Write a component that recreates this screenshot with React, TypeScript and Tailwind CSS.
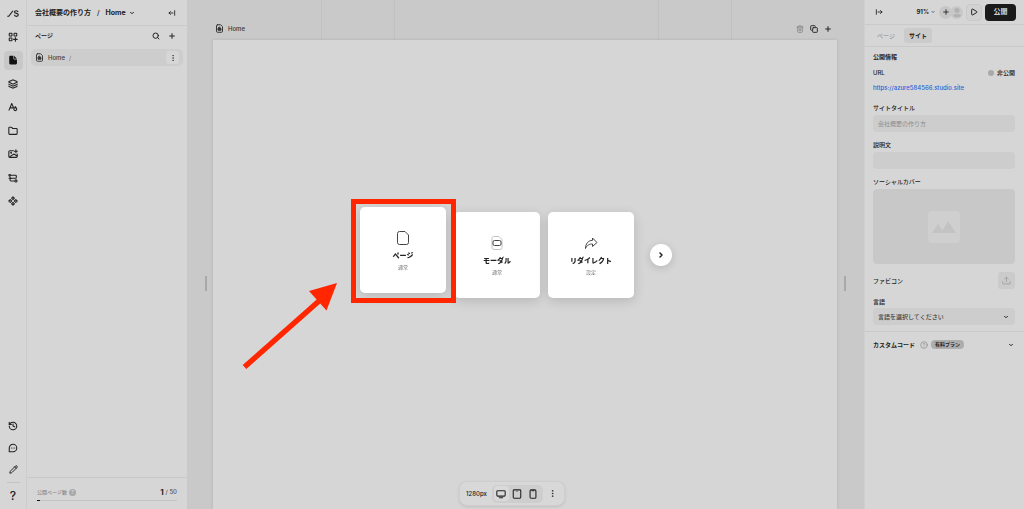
import type { ReactNode } from "react"
import {
  ChevronDown,
  ChevronRight,
  CircleHelp,
  Copy,
  EllipsisVertical,
  Folder,
  History,
  Layers,
  Pencil,
  Play,
  Plus,
  Search,
  Trash2,
} from "lucide-react"

interface IconProps {
  className?: string
  children?: ReactNode
}

const Icon = ({ className = "size-[10px]", children }: IconProps) => (
  <svg
    viewBox="0 0 24 24"
    className={className}
    fill="none"
    stroke="currentColor"
    strokeWidth="2.6"
    strokeLinecap="round"
    strokeLinejoin="round"
    aria-hidden="true"
  >
    {children}
  </svg>
)

const Logo = () => (
  <svg viewBox="0 0 24 14" className="h-[7px] w-3" fill="none" stroke="currentColor" strokeWidth="2.4" aria-hidden="true">
    <path d="M0.5 12.5h3L12 1.5" />
    <path d="M22 4.2C21.6 2.4 20.3 1.5 18.4 1.5c-2 0-3.4 1-3.4 2.6 0 3.8 7.6 1.8 7.6 5.6 0 1.8-1.6 2.9-3.8 2.9-2.3 0-3.8-1.1-4.1-3.1" />
  </svg>
)

const AddBoxIcon = () => (
  <Icon>
    <rect x="3" y="3" width="6.5" height="6.5" rx="1" />
    <rect x="14.5" y="3" width="6.5" height="6.5" rx="1" />
    <rect x="3" y="14.5" width="6.5" height="6.5" rx="1" />
    <path d="M17.75 13.5v8.5M13.5 17.75H22" />
  </Icon>
)

const PageSolidIcon = () => (
  <svg viewBox="0 0 24 24" className="size-[10px]" fill="currentColor" aria-hidden="true">
    <path d="M5.5 2H13v5.5c0 1.7 1.3 3 3 3h5.5V20a2.5 2.5 0 0 1-2.5 2.5H5.5A2.5 2.5 0 0 1 3 20V4.5A2.5 2.5 0 0 1 5.5 2z" />
    <path d="M14.5 2 21.5 9H16.5A2 2 0 0 1 14.5 7z" />
  </svg>
)

const TypeIcon = () => (
  <Icon>
    <path d="M2.5 19.5 9 3.5l4.2 10M5 14h7" />
    <circle cx="17.5" cy="17" r="3.6" />
    <path d="M17.5 11v2.4" />
  </Icon>
)

const ImageAddIcon = () => (
  <Icon>
    <path d="M13 4H4.5A2.5 2.5 0 0 0 2 6.5v11A2.5 2.5 0 0 0 4.500 20h15a2.5 2.5 0 0 0 2.5-2.5V12" />
    <path d="m4 19 10-7 8 5M19 2v7M15.5 5.5h7" />
    <circle cx="7.5" cy="9" r="1" />
  </Icon>
)

const FlowIcon = () => (
  <Icon>
    <circle cx="4" cy="5.5" r="2" />
    <path d="M6.500 5.5H18a2 2 0 0 1 2 2v3a2 2 0 0 1-2 2H7a2 2 0 0 0-2 2V17a2 2 0 0 0 2 2h8" />
    <path d="M5 9.500v3M2.500 12.5H7" />
    <circle cx="19" cy="19" r="2.6" />
  </Icon>
)

const ComponentIcon = () => (
  <Icon>
    <path d="m12 2 3.3 3.3L12 8.600 8.700 5.300zM12 15.400l3.300 3.300L12 22l-3.300-3.300zM5.300 8.700 8.600 12l-3.300 3.300L2 12zM18.700 8.700 22 12l-3.300 3.300-3.300-3.300z" />
  </Icon>
)

const CommentIcon = () => (
  <Icon>
    <path d="M3 21V12a9 9 0 1 1 9 9z" />
    <path d="M8 12h.01M12 12h.01M16 12h.01" />
  </Icon>
)

const HomePageIcon = () => (
  <Icon className="size-[9px]">
    <path d="M6.5 2H15l5 5v12.5a2.500 2.500 0 0 1-2.500 2.500h-11A2.500 2.500 0 0 1 4 19.500v-15A2.500 2.500 0 0 1 6.500 2z" />
    <path d="m12 8.500 4 3.500v4.500H8V12z" fill="currentColor" />
  </Icon>
)

const CollapseIcon = ({ flip = false }: { flip?: boolean }) => (
  <Icon className={flip ? "size-2 rotate-180" : "size-2"}>
    <path d="M20 5v14M15 12H3M7.5 7.5 3 12l4.5 4.5" />
  </Icon>
)

const railTools = [
  { label: "追加", icon: <AddBoxIcon /> },
  { label: "ページ", icon: <PageSolidIcon />, active: true },
  { label: "レイヤー", icon: <Layers className="size-[10px]" strokeWidth={2.6} /> },
  { label: "フォント", icon: <TypeIcon /> },
  { label: "フォルダ", icon: <Folder className="size-[10px]" strokeWidth={2.6} /> },
  { label: "画像", icon: <ImageAddIcon /> },
  { label: "フロー", icon: <FlowIcon /> },
  { label: "コンポーネント", icon: <ComponentIcon /> },
]

const Rail = () => (
  <nav className="flex w-[27px] shrink-0 flex-col items-center border-r border-[#cdcdcd]">
    <div className="flex h-[27px] items-center">
      <Logo />
    </div>
    <div className="flex h-[184px] flex-col justify-between">
      {railTools.map((tool) => (
        <button
          key={tool.label}
          aria-label={tool.label}
          className={`flex size-[19px] items-center justify-center rounded ${tool.active ? "bg-[#c8c8c8] text-[#111]" : ""}`}
        >
          {tool.icon}
        </button>
      ))}
    </div>
    <div className="mt-auto flex flex-col items-center gap-[3px] pb-1">
      <button aria-label="履歴" className="flex size-[19px] items-center justify-center">
        <History className="size-[10px]" strokeWidth={2.6} />
      </button>
      <button aria-label="コメント" className="flex size-[19px] items-center justify-center">
        <CommentIcon />
      </button>
      <button aria-label="編集" className="flex size-[19px] items-center justify-center">
        <Pencil className="size-[9px]" strokeWidth={2.6} />
      </button>
      <div className="h-px w-[13px] bg-[#c4c4c4]" />
      <button aria-label="ヘルプ" className="size-[19px] text-[12px] leading-[19px] font-medium">
        ?
      </button>
    </div>
  </nav>
)

const PagesPanel = () => (
  <aside className="flex w-[160px] shrink-0 flex-col">
    <div className="flex h-[26px] items-center border-b border-[#cacaca] pr-[11px] pl-2 font-bold">
      <span>会社概要の作り方</span>
      <span className="px-1.5 font-medium">/</span>
      <button className="flex items-center gap-[3px]">
        Home <ChevronDown className="size-[6px]" strokeWidth={4} />
      </button>
      <button aria-label="パネルを閉じる" className="ml-auto">
        <CollapseIcon />
      </button>
    </div>
    <div className="flex h-5 items-center pr-[11px] pl-2">
      <h2 className="text-[6px] font-bold">ページ</h2>
      <button aria-label="検索" className="mr-2 ml-auto">
        <Search className="size-2" strokeWidth={3} />
      </button>
      <button aria-label="ページを追加">
        <Plus className="size-2" strokeWidth={3} />
      </button>
    </div>
    <div className="mx-1 mt-[3px] flex h-[17px] items-center rounded-[5px] bg-[#cdcdcd] px-1 text-[6px] font-medium text-[#3a3a3a]">
      <HomePageIcon />
      <span className="ml-1">Home</span>
      <span className="ml-1 text-[6px] text-[#888]">/</span>
      <button aria-label="メニュー" className="ml-auto flex size-[13px] items-center justify-center rounded-[3px] bg-[#d6d6d6]">
        <EllipsisVertical className="size-2" strokeWidth={2} />
      </button>
    </div>
    <div className="mt-auto h-8 border-t border-[#c8c8c8] px-2.5 pt-2">
      <div className="flex items-center">
        <span className="text-[5px] font-medium text-[#888]">公開ページ数</span>
        <span className="ml-0.5 flex size-[7px] items-center justify-center rounded-full bg-[#a8a8a8] text-[5px] font-bold text-[#d6d6d6]">?</span>
        <span className="ml-auto text-[8px] leading-[12px] font-bold">1</span>
        <span className="ml-0.5 text-[6px] font-medium text-[#555]">/ 50</span>
      </div>
      <div className="mt-0.5 h-px bg-[#c4c4c4]">
        <div className="h-px w-[3px] bg-[#111]" />
      </div>
    </div>
  </aside>
)

const Canvas = () => (
  <main className="flex min-w-0 flex-1 flex-col bg-[#c9c9c9]">
    <div className="flex h-10 shrink-0">
      <div className="flex flex-1 items-end gap-1 pb-[7px] pl-[28px] text-[#333]">
        <HomePageIcon />
        <span className="text-[6px] leading-[9px] font-medium">Home</span>
      </div>
      <div className="w-[74px] border-x border-[#c1c1c1]" />
      <div className="w-[263px]" />
      <div className="w-[74px] border-x border-[#c1c1c1]" />
      <div className="flex w-[132px] items-end justify-end gap-1.5 pr-8 pb-[7px]">
        <button aria-label="削除" className="text-[#888]">
          <Trash2 className="size-2" strokeWidth={2.6} />
        </button>
        <button aria-label="複製">
          <Copy className="size-2" strokeWidth={2.8} />
        </button>
        <button aria-label="追加">
          <Plus className="size-2" strokeWidth={3} />
        </button>
      </div>
    </div>
    <div className="flex flex-1">
      <div className="flex w-[26px] items-center justify-end pt-[18px] pr-1.5">
        <div className="h-[15px] w-0.5 bg-[#a8a8a8]" />
      </div>
      <div className="flex flex-1 flex-col items-center justify-end bg-[#d6d6d6] pb-[3px] shadow-[0_0_3px_rgba(0,0,0,0.12)]">
        <div className="mr-[26px] flex h-[25px] items-center rounded-lg border border-[#cecece] bg-[#d8d8d8] px-1.5 shadow-[0_1px_3px_rgba(0,0,0,0.1)]">
          <span className="text-[6px] font-medium">1280px</span>
          <div className="ml-[5px] flex h-[18px] items-center rounded-[5px] bg-[#cecece] px-0.5">
            <button aria-label="デスクトップ" className="flex size-[15px] items-center justify-center rounded bg-[#dadada]">
              <Icon>
                <rect x="2" y="4" width="20" height="13" rx="2" />
                <path d="M8 21h8" />
              </Icon>
            </button>
            <button aria-label="タブレット" className="flex h-[15px] w-4 items-center justify-center">
              <Icon>
                <rect x="3" y="2" width="18" height="20" rx="2" />
                <path d="M12 5.5h.01" />
              </Icon>
            </button>
            <button aria-label="モバイル" className="flex h-[15px] w-4 items-center justify-center">
              <Icon>
                <rect x="5" y="2" width="14" height="20" rx="2.5" />
                <path d="M10 4h4" />
              </Icon>
            </button>
          </div>
          <button aria-label="その他" className="mr-px ml-[5px]">
            <EllipsisVertical className="size-[9px]" strokeWidth={2} />
          </button>
        </div>
      </div>
      <div className="flex w-[27px] items-center pt-[18px] pl-[7px]">
        <div className="h-[15px] w-0.5 bg-[#a8a8a8]" />
      </div>
    </div>
  </main>
)

const SettingsPanel = () => (
  <aside className="w-[160px] shrink-0 border-l border-[#cfcfcf] text-[6px] leading-[12px]">
    <div className="flex h-[25px] items-center border-b border-[#cacaca] pr-2 pl-2.5">
      <button aria-label="パネルを閉じる">
        <CollapseIcon flip />
      </button>
      <button className="ml-auto flex items-center gap-0.5 font-bold">
        91% <ChevronDown className="size-[4px]" strokeWidth={4} />
      </button>
      <button aria-label="メンバーを招待" className="ml-1 flex size-[13px] items-center justify-center rounded-full bg-[#c6c6c6]">
        <Plus className="size-2" strokeWidth={2.6} />
      </button>
      <span className="-ml-0.5 flex size-[13px] items-center justify-center rounded-full bg-[#c8c8c8]">
        <svg viewBox="0 0 24 24" className="size-3 text-[#b2b2b2]" fill="currentColor" aria-hidden="true">
          <circle cx="12" cy="9" r="5" />
          <path d="M3.5 19.5c2-4.5 15-4.5 17 0-4 4-13 4-17 0z" />
        </svg>
      </span>
      <button aria-label="プレビュー" className="ml-[3px] flex h-[17px] w-4 items-center justify-center rounded border border-[#c9c9c9] bg-[#d2d2d2]">
        <Play className="size-2" strokeWidth={3} />
      </button>
      <button className="ml-[3px] h-[17px] w-[31px] rounded bg-[#1a1a1a] text-[7px] font-bold text-[#d6d6d6]">公開</button>
    </div>
    <div className="flex h-[22px] items-center border-b border-[#cacaca] pl-2">
      <button className="px-1 text-[#888]">ページ</button>
      <button className="ml-[5px] h-[15px] rounded-[3px] bg-[#cbcbcb] px-[5px] font-bold">サイト</button>
    </div>

    <div className="pt-1 pr-[9px] pb-1.5 pl-2">
      <h3 className="font-bold">公開情報</h3>
      <div className="mt-1 flex items-center">
        <span className="font-medium">URL</span>
        <span className="mr-[3px] ml-auto size-1.5 rounded-full bg-[#a9a9a9]" />
        <span className="font-medium">非公開</span>
      </div>
      <a href="https://azure584566.studio.site" className="mt-[3px] block font-medium text-[#2a63d6]">
        https://azure584566.studio.site
      </a>

      <label htmlFor="site-title" className="mt-2 block font-medium">サイトタイトル</label>
      <input
        id="site-title"
        placeholder="会社概要の作り方"
        className="mt-px block h-[17px] w-full rounded bg-[#cdcdcd] px-[5px] placeholder:text-[#8c8c8c]"
      />
      <label htmlFor="description" className="mt-[7px] block font-medium">説明文</label>
      <input id="description" className="mt-px block h-[17px] w-full rounded bg-[#cdcdcd] px-[5px]" />

      <p className="mt-[7px] font-medium">ソーシャルカバー</p>
      <div className="mt-px flex h-[75px] items-center justify-center rounded bg-[#c8c8c8]">
        <div className="flex size-8 items-center justify-center rounded bg-[#cfcfcf]">
          <svg viewBox="0 0 24 12" className="h-3 w-6 text-[#c3c3c3]" fill="currentColor" aria-hidden="true">
            <path d="M0 12 6 3l4.5 6.5L16 0l8 12z" />
          </svg>
        </div>
      </div>

      <div className="mt-2 flex h-[17px] items-center justify-between">
        <span className="font-medium">ファビコン</span>
        <button aria-label="ファビコンをアップロード" className="flex size-[17px] items-center justify-center rounded-[3px] bg-[#cbcbcb] text-[#a5a5a5]">
          <Icon className="size-[9px]">
            <path d="M12 15V3M7 8l5-5 5 5M2 15v5a1 1 0 0 0 1 1h18a1 1 0 0 0 1-1v-5" />
          </Icon>
        </button>
      </div>

      <label htmlFor="language" className="mt-[7px] block font-medium">言語</label>
      <div className="grid items-center">
        <select
          id="language"
          className="col-start-1 row-start-1 h-[17px] w-full appearance-none rounded bg-[#cdcdcd] px-[5px] font-medium text-[#444]"
        >
          <option>言語を選択してください</option>
        </select>
        <ChevronDown className="pointer-events-none col-start-1 row-start-1 mr-1.5 size-[6px] justify-self-end" strokeWidth={4} />
      </div>
    </div>

    <button className="flex h-[26px] w-full items-center border-t border-[#cacaca] pr-[9px] pl-2 text-left">
      <span className="font-bold">カスタムコード</span>
      <CircleHelp className="ml-[5px] size-2 text-[#888]" />
      <span className="ml-[3px] rounded-sm bg-[#adadad] px-1 text-[5px] leading-[9px] font-bold">有料プラン</span>
      <ChevronDown className="mr-px ml-auto size-[6px]" strokeWidth={4} />
    </button>
  </aside>
)

const PageIcon = () => (
  <svg viewBox="0 0 14 16" className="h-4 w-[14px]" fill="none" stroke="#444" aria-hidden="true">
    <path d="M3.5 1.5h5.5L12.5 5v7.5a2 2 0 0 1-2 2h-7a2 2 0 0 1-2-2v-9a2 2 0 0 1 2-2z" />
  </svg>
)

const ModalIcon = () => (
  <svg viewBox="0 0 14 16" className="h-4 w-[14px]" fill="none" stroke="#c4c4c4" aria-hidden="true">
    <path d="M3.5 1.5h5.5L12 4.5v8a2 2 0 0 1-2 2H4a2 2 0 0 1-2-2v-9a1.5 2 0 0 1 1.5-2z" />
    <rect x="3" y="5.5" width="8" height="5" rx="1.5" stroke="#444" fill="#fff" />
  </svg>
)

const RedirectIcon = () => (
  <svg viewBox="0 0 14 16" className="h-4 w-[14px]" fill="none" stroke="#444" strokeLinejoin="round" aria-hidden="true">
    <path d="M8.5 3 13 7.5l-4.5 4V9C5.5 9 3 10 1.5 13.5 1.5 9 4 5.500 8.5 5.300z" />
  </svg>
)

const pageTypes = [
  { name: "ページ", kind: "通常", icon: <PageIcon />, highlighted: true },
  { name: "モーダル", kind: "通常", icon: <ModalIcon /> },
  { name: "リダイレクト", kind: "設定", icon: <RedirectIcon /> },
]

// Red frame and arrow pointing at the card to choose
const Callout = () => (
  <>
    <div className="pointer-events-none absolute -top-2 -right-2.5 -bottom-2.5 -left-[9px] border-[5px] border-[#ff2600]" />
    <svg viewBox="0 0 96 88" className="pointer-events-none absolute top-[76px] -left-[118px] h-[88px] w-24 max-w-none" fill="#ff2600" aria-hidden="true">
      <path d="M2.5 84 77 18" stroke="#ff2600" strokeWidth="5.4" />
      <path d="M95 0 84.5 27.5 67 8z" />
    </svg>
  </>
)

const PageTypePicker = () => (
  <div role="dialog" aria-label="ページの種類" className="fixed inset-0 flex items-center justify-center pl-2">
    <div className="flex items-center gap-2">
      {pageTypes.map((type) => (
        <div key={type.name} className={type.highlighted ? "relative z-10 mb-2.5" : ""}>
          <button className="flex size-[86px] flex-col items-center rounded-[5px] bg-white pt-[23px] shadow-[0_3px_12px_rgba(0,0,0,0.15)]">
            {type.icon}
            <span className="mt-1 text-[7px] leading-[12px] font-extrabold">{type.name}</span>
            <span className="text-[5px] leading-[11px] text-[#777]">{type.kind}</span>
          </button>
          {type.highlighted && <Callout />}
        </div>
      ))}
    </div>
    <button
      aria-label="次へ"
      className="ml-4 flex size-[22px] items-center justify-center rounded-full bg-white shadow-[0_2px_8px_rgba(0,0,0,0.15)]"
    >
      <ChevronRight className="size-2" strokeWidth={4.5} />
    </button>
  </div>
)

export default function App() {
  return (
    <div className="flex min-h-screen bg-[#d6d6d6] font-['Inter','Noto_Sans_CJK_JP',sans-serif] text-[7px] leading-[12px] text-[#222]">
      <Rail />
      <PagesPanel />
      <Canvas />
      <SettingsPanel />
      <PageTypePicker />
    </div>
  )
}
